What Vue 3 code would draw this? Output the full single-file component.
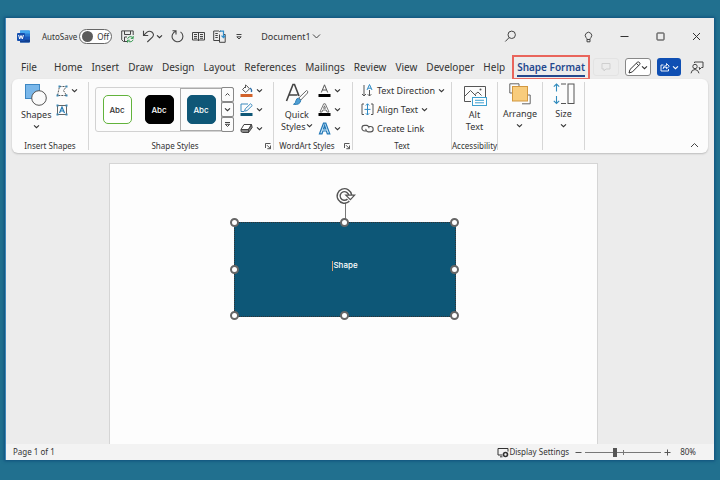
<script setup>
import { h, ref } from 'vue'

const autosave = ref(false)
const zoom = ref(80)
const tabs = ['File', 'Home', 'Insert', 'Draw', 'Design', 'Layout', 'References', 'Mailings', 'Review', 'View', 'Developer', 'Help']
const handles = ['nw', 'n', 'ne', 'w', 'e', 'sw', 's', 'se']

const Chevron = () =>
  h('svg', { width: 7, height: 7, viewBox: '0 0 7 7', fill: 'none', stroke: 'currentColor', 'stroke-width': 1.1, 'aria-hidden': 'true' }, [
    h('path', { d: 'M1 2.3 3.5 4.7 6 2.3' })
  ])
const Launcher = () =>
  h('svg', { width: 8, height: 8, viewBox: '0 0 8 8', fill: 'none', stroke: '#444', 'stroke-width': 0.9, 'aria-hidden': 'true' }, [
    h('path', { d: 'M1.5 6V1.5H6.5M3 3.2 6.4 6.6M6.5 3.5V6.7H3.3' })
  ])
</script>

<template>
  <main class="desktop">
    <section class="window" aria-label="Document window">
      <header class="titlebar">
        <svg class="logo" width="13" height="13" viewBox="0 0 13 13" aria-hidden="true">
          <rect x="3" y="0.5" width="10" height="12" rx="1" fill="#2b7cd3" />
          <path d="M3 .5H12Q13 .5 13 1.5V3.5H3Z" fill="#41a5ee" />
          <path d="M3 6.5H13V9.5H3Z" fill="#185abd" />
          <path d="M3 9.5H13V11.5Q13 12.5 12 12.5H3Z" fill="#103f91" />
          <rect x="0" y="3" width="8" height="8" rx="1" fill="#1550b0" />
          <path d="M1.6 5 2.7 9 4 5.5 5.3 9 6.4 5" fill="none" stroke="#fff" stroke-width="1" />
        </svg>
        <label class="autosave">
          <span>AutoSave</span>
          <input v-model="autosave" type="checkbox" />
          <span class="switch"><i></i>{{ autosave ? 'On' : 'Off' }}</span>
        </label>
        <div class="quick">
          <button aria-label="Save">
            <svg width="13" height="13" viewBox="0 0 13 13" fill="none" stroke="#444">
              <path d="M6 11.5H2.5L.7 9.8V.9H12.2V5M3.5 1V4.5H9.5V1M3.5 11V7H6" />
              <path d="M6.5 8.8Q7.5 6.4 9.8 6.6 11.3 6.8 12 8.2M12.2 6V8.4H9.8M12.2 9.8Q11 12 9 11.9 7.4 11.7 6.8 10.5M6.5 12.6V10.2H8.8" stroke="#3a9c55" />
            </svg>
          </button>
          <button class="split" aria-label="Undo">
            <svg width="13" height="13" viewBox="0 0 13 13" fill="none" stroke="#444" stroke-width="1.1">
              <path d="M1.5.8V5.5H6.2M1.6 5.4 4.7 2.4Q7.3.3 9.8 2 12.8 4.5 10.4 7.2L5.3 12" />
            </svg>
            <Chevron />
          </button>
          <button aria-label="Repeat">
            <svg width="13" height="13" viewBox="0 0 13 13" fill="none" stroke="#444" stroke-width="1.1">
              <path d="M1.5.8H5V4.4M5 1.2A5.4 5.4 0 1 0 9.5 1.9" />
            </svg>
          </button>
          <button aria-label="Read mode">
            <svg width="13" height="11" viewBox="0 0 13 11" fill="none" stroke="#444">
              <path d="M.5 1.5H12.5V9H.5ZM6.5 1.5V10M2 3.5H5M2 5.5H5M2 7.3H5M8 3.5H11M8 5.5H11M8 7.3H11" />
            </svg>
          </button>
          <button aria-label="Compare">
            <svg width="13" height="13" viewBox="0 0 13 13" fill="none" stroke="#444">
              <path d="M6 10.5H.7V1H5.8L6.5 1.7 7.2 1H8M2.3 3.5H4.8M2.3 5.5H4.8M2.3 7.5H4.8M6.5 4.5V12.3H12.2V4.5H10.8" />
              <path d="M7 1.2H10.5V7.5M8.5 5.7 10.5 7.7 12.5 5.7" stroke="#2f8dcb" stroke-width="1.2" />
            </svg>
          </button>
          <button class="customize" aria-label="Customize toolbar">
            <svg width="8" height="8" viewBox="0 0 8 8" fill="none" stroke="#444"><path d="M1.5 1.5H6.5M1.8 3.8 4 6 6.2 3.8Z" /></svg>
          </button>
        </div>
        <button class="docname">
          Document1
          <svg width="9" height="7" viewBox="0 0 9 7" fill="none" stroke="#444"><path d="M1 1.5 4.5 5 8 1.5" /></svg>
        </button>
        <div class="wincontrols">
          <button aria-label="Search">
            <svg width="13" height="13" viewBox="0 0 13 13" fill="none" stroke="#444"><circle cx="7.7" cy="4.8" r="3.7" /><path d="M5.1 7.6 1.3 11.5" /></svg>
          </button>
          <button class="tips" aria-label="Tips">
            <svg width="9" height="12" viewBox="0 0 9 12" fill="none" stroke="#444"><path d="M3 8.5Q3 7.5 2 6.5A3.2 3.2 0 1 1 7 6.5Q6 7.5 6 8.5V10.8H3ZM3 8.5H6" /></svg>
          </button>
          <button aria-label="Minimize">
            <svg width="9" height="9" viewBox="0 0 9 9" fill="none" stroke="#333"><path d="M.5 4.5H8.5" /></svg>
          </button>
          <button aria-label="Maximize">
            <svg width="9" height="9" viewBox="0 0 9 9" fill="none" stroke="#333"><rect x="1" y="1" width="7" height="7" rx="0.5" /></svg>
          </button>
          <button aria-label="Close">
            <svg width="9" height="9" viewBox="0 0 9 9" fill="none" stroke="#333"><path d="M1 1 8 8M8 1 1 8" /></svg>
          </button>
        </div>
      </header>

      <nav class="tabs" aria-label="Ribbon tabs">
        <a v-for="t in tabs" :key="t" href="#" :class="{ file: t === 'File' }">{{ t }}</a>
        <a href="#" class="current" aria-current="page"><span>Shape Format</span></a>
        <div class="actions">
          <button class="comments" aria-label="Comments">
            <svg width="10" height="10" viewBox="0 0 10 10" fill="none" stroke="#cfcfcf"><path d="M1 1.5H9V7H5L3 9V7H1Z" /></svg>
          </button>
          <button class="editing" aria-label="Editing mode">
            <svg width="13" height="13" viewBox="0 0 13 13" fill="none" stroke="#333"><path d="M1 12 2 8.5 9.3 1.3Q10.3.5 11.5 1.5 12.5 2.6 11.6 3.6L4.4 10.9ZM8.4 2.3 10.7 4.6" /></svg>
            <Chevron />
          </button>
          <button class="share" aria-label="Share">
            <svg width="10" height="10" viewBox="0 0 10 10" fill="none" stroke="#fff"><path d="M3.5 3H1V9H8.5V7M3 6.5Q3.5 3.5 6.5 3.5V1.5L9.3 4.3 6.5 6.7V5Q4.3 5 3 6.5Z" stroke-width=".9" /></svg>
            <Chevron />
          </button>
          <button class="presence" aria-label="Catch up">
            <svg width="14" height="13" viewBox="0 0 14 13" fill="none" stroke="#444"><circle cx="5" cy="5.5" r="2.2" /><path d="M1 12.3Q1.5 8.5 5 8.5 8.3 8.7 9 12.3M4.5 2V1H13V6.5H11.5L9.5 8.5V6.5H8.7" /></svg>
          </button>
        </div>
      </nav>

      <div class="ribbon">
        <section class="group insert">
          <div class="body">
            <button class="big">
              <svg width="22" height="23" viewBox="0 0 22 23"><rect x="0.5" y="1.5" width="14" height="14" fill="#79b7ea" stroke="#3d87c3" /><circle cx="14" cy="15" r="7.3" fill="#fafafa" stroke="#555" /></svg>
              <span>Shapes</span>
              <Chevron />
            </button>
            <div class="stack">
              <button class="split" aria-label="Edit shape">
                <svg width="12" height="12" viewBox="0 0 12 12" fill="none" stroke="#555"><path d="M3.5 1.5H10.5L7.5 5.5 10.5 10.5H1.5Z" stroke-dasharray="2 1" /><path d="M2.5.5h2v2h-2zM9.5.5h2v2h-2zM.5 9.5h2v2h-2zM9.5 9.5h2v2h-2z" fill="#3d87b3" stroke="none" /></svg>
                <Chevron />
              </button>
              <button aria-label="Draw text box">
                <svg width="12" height="12" viewBox="0 0 12 12" fill="none" stroke="#5595b8"><path d="M1.5 1.5H10.5V10.5H1.5Z" stroke="#666" /><path d="M3.5 9 6 3 8.5 9M4.5 7H7.5" stroke="#237bb5" stroke-width="1.2" /><path d="M.5.5h2v2h-2zM9.5.5h2v2h-2zM.5 9.5h2v2h-2zM9.5 9.5h2v2h-2z" fill="#3d87b3" stroke="none" /></svg>
              </button>
            </div>
          </div>
          <h2>Insert Shapes</h2>
        </section>

        <section class="group styles">
          <div class="body">
            <div class="gallery">
              <button><span class="tile green">Abc</span></button>
              <button><span class="tile black">Abc</span></button>
              <button class="picked"><span class="tile teal">Abc</span></button>
              <div class="scroller">
                <button aria-label="Previous styles"><svg width="7" height="7" viewBox="0 0 7 7" fill="none" stroke="#444"><path d="M1.5 4.5 3.5 2.5 5.5 4.5" /></svg></button>
                <button aria-label="Next styles"><Chevron /></button>
                <button aria-label="More styles"><svg width="7" height="7" viewBox="0 0 7 7" fill="none" stroke="#444"><path d="M1 1.5H6M1.3 3.3 3.5 5.5 5.7 3.3Z" /></svg></button>
              </div>
            </div>
            <div class="stack">
              <button class="split" aria-label="Shape fill">
                <svg width="13" height="13" viewBox="0 0 13 13" fill="none" stroke="#555"><path d="M2.5 5.5 6.5 1.5 9.5 4.8 5.8 8.5ZM5.5 4V.7" /><path d="M10 4Q12.3 5.5 11.3 8" stroke="#2f6fa8" stroke-width="1.4" /><rect x="0.5" y="10" width="12" height="3" fill="#d2622a" stroke="none" /></svg>
                <Chevron />
              </button>
              <button class="split" aria-label="Shape outline">
                <svg width="13" height="13" viewBox="0 0 13 13" fill="none" stroke="#3b89bd"><path d="M8 1H1V8.5H4M4.5 8.2 5.3 5.8 10.5.8 12.3 2.5 7 7.6Z" /><rect x="0.5" y="10" width="12" height="3" fill="#0f5777" stroke="none" /></svg>
                <Chevron />
              </button>
              <button class="split" aria-label="Shape effects">
                <svg width="13" height="13" viewBox="0 0 13 13" stroke="#444"><path d="M4 2.5H11.5L8.5 7.5H1Z" fill="#fff" /><path d="M1 7.5H8.5V10.5H2.5L1 9.5ZM8.5 7.5 11.5 2.5 12.2 5.5 8.5 10.5Z" fill="#888" /></svg>
                <Chevron />
              </button>
            </div>
          </div>
          <h2>Shape Styles</h2>
          <button class="launch" aria-label="Format shape"><Launcher /></button>
        </section>

        <section class="group wordart">
          <div class="body">
            <button class="big">
              <svg width="24" height="23" viewBox="0 0 24 23" fill="none"><path d="M1.5 18 8 1.5H9.5L14 13M4.5 12H12.5" stroke="#444" stroke-width="1.6" /><path d="M21.5 7.5Q23.5 8 22.5 10L15.8 17 13.8 15Z" fill="#fff" stroke="#666" /><path d="M13.5 15.2 15.8 17.4Q15 22.3 8.5 21.3 11 20 11 17.5 11.5 15.3 13.5 15.2Z" fill="#4f9fd4" stroke="#2e7db3" /></svg>
              <span>Quick</span>
              <span class="inline">Styles <Chevron /></span>
            </button>
            <div class="stack">
              <button class="split" aria-label="Text fill">
                <svg width="13" height="13" viewBox="0 0 13 13"><path d="M3.3 8.5 6.5.8 9.7 8.5M4.4 6H8.6" fill="none" stroke="#555" /><rect x="0.5" y="10" width="12" height="3" /></svg>
                <Chevron />
              </button>
              <button class="split" aria-label="Text outline">
                <svg width="13" height="13" viewBox="0 0 13 13"><path d="M2 9 5.7.8H7.3L11 9H9L8.2 7H4.8L4 9ZM5.5 5.3H7.5L6.5 2.8Z" fill="#fff" stroke="#555" stroke-width=".8" /><rect x="0.5" y="10" width="12" height="3" /></svg>
                <Chevron />
              </button>
              <button class="split" aria-label="Text effects">
                <svg width="13" height="13" viewBox="0 0 13 13"><path d="M1.5 11.8 5.5 1.2H7.8L11.8 11.8H9.3L8.4 9H4.9L4 11.8ZM5.5 7H7.8L6.6 3.5Z" fill="#d7ecfa" stroke="#2379b8" stroke-width="1.2" /></svg>
                <Chevron />
              </button>
            </div>
          </div>
          <h2>WordArt Styles</h2>
          <button class="launch" aria-label="Format text effects"><Launcher /></button>
        </section>

        <section class="group text">
          <div class="body">
            <div class="stack">
              <button class="split">
                <svg width="13" height="13" viewBox="0 0 13 13" fill="none" stroke="#555"><path d="M3 1V12M1 10 3 12 5 10" /><path d="M8.5 6V12M6.7 10.2 8.5 12 10.3 10.2" /><path d="M6 6 8.5.5 11 6M7 4.2H10" stroke="#2e8ac4" /></svg>
                Text Direction <Chevron />
              </button>
              <button class="split">
                <svg width="13" height="13" viewBox="0 0 13 13" fill="none" stroke="#555"><path d="M3 1H1V11.5H3M10 1H12V11.5H10" /><path d="M6.5.8V12M4.8 2.5 6.5.8 8.2 2.5M4.8 10.3 6.5 12 8.2 10.3M3.5 6.4H9.5" stroke="#2e8ac4" /></svg>
                Align Text <Chevron />
              </button>
              <button class="split">
                <svg width="13" height="13" viewBox="0 0 13 13" fill="none" stroke="#555" stroke-width="1.1"><path d="M5.5 9H3.7A2.8 2.8 0 0 1 3.7 3.4H5.5A2.6 2.6 0 0 1 8 6.3M7.5 4.5H9.5A2.7 2.7 0 0 1 9.5 9.9H7.3A2.6 2.6 0 0 1 4.9 6.8" /></svg>
                Create Link
              </button>
            </div>
          </div>
          <h2>Text</h2>
        </section>

        <section class="group alt">
          <div class="body">
            <button class="big">
              <svg width="24" height="23" viewBox="0 0 24 23" fill="none" stroke="#555"><path d="M8 18.5H1.5V3.5H22.5V14M1.5 13.5 7.5 7.5 13 13M12 11.5 15 9 18.5 12.5" /><circle cx="17.5" cy="6.5" r="1" fill="#555" stroke="none" /><rect x="9.5" y="14.5" width="14" height="8" fill="#fff" stroke="#3fa0d0" /><path d="M12 17.3H21M12 19.8H21" stroke="#3fa0d0" /></svg>
              <span>Alt</span>
              <span>Text</span>
            </button>
          </div>
          <h2>Accessibility</h2>
        </section>

        <section class="group arrange">
          <div class="body">
            <button class="big">
              <svg width="22" height="22" viewBox="0 0 22 22" fill="none" stroke="#666"><path d="M3 10H.8V.8H10V3M13 20.8H21.2V12H18" /><rect x="3.5" y="3.5" width="15" height="14.5" fill="#f8cc7c" stroke="#d29840" /></svg>
              <span>Arrange</span>
              <Chevron />
            </button>
          </div>
        </section>

        <section class="group size">
          <div class="body">
            <button class="big">
              <svg width="22" height="22" viewBox="0 0 22 22" fill="none" stroke="#555"><path d="M3.5 1V8.5M.8 3.7 3.5 1 6.2 3.7M3.5 13V20.5M.8 17.8 3.5 20.5 6.2 17.8" stroke="#318bbd" stroke-width="1.1" /><path d="M8 1H13M8 20.5H13" /><rect x="15" y="1" width="6" height="19.5" /></svg>
              <span>Size</span>
              <Chevron />
            </button>
          </div>
        </section>

        <button class="collapse" aria-label="Collapse ribbon">
          <svg width="9" height="7" viewBox="0 0 9 7" fill="none" stroke="#444"><path d="M1 5 4.5 1.5 8 5" /></svg>
        </button>
      </div>

      <div class="workspace">
        <article class="page">
          <div class="shape">
            <span class="stem"></span>
            <svg class="rotate" width="20" height="18" viewBox="0 0 20 18" fill="none"><path d="M12.4 13.2A5.8 5.8 0 1 1 14.2 8.2" stroke="#555" stroke-width="4.4" /><path d="M12.4 13.2A5.8 5.8 0 1 1 14.2 8.2" stroke="#fff" stroke-width="1.5" /><path d="M9.8 8.2H18.6L14.4 12.6Z" fill="#fff" stroke="#555" stroke-width="1.2" /></svg>
            <p><i class="caret"></i>Shape</p>
            <span v-for="d in handles" :key="d" class="handle" :class="d"></span>
          </div>
        </article>
      </div>

      <footer class="status">
        <span>Page 1 of 1</span>
        <button class="display">
          <svg width="12" height="11" viewBox="0 0 12 11" fill="none" stroke="#333"><path d="M5.5 8H1V1.5H11V4.5M3 9.8H5.5" /><circle cx="8.5" cy="7.5" r="2" stroke-width="1.6" /></svg>
          Display Settings
        </button>
        <button class="step" aria-label="Zoom out"><svg width="7" height="7" viewBox="0 0 7 7" stroke="#555"><path d="M.5 3.5H6.5" /></svg></button>
        <input v-model="zoom" type="range" min="10" max="190" aria-label="Zoom" />
        <button class="step" aria-label="Zoom in"><svg width="7" height="7" viewBox="0 0 7 7" stroke="#555"><path d="M.5 3.5H6.5M3.5 .5V6.5" /></svg></button>
        <span class="percent">{{ zoom }}%</span>
      </footer>
    </section>
  </main>
</template>

<style>
body {
  margin: 0;
  background: #21708f;
}
</style>

<style scoped>
* {
  box-sizing: border-box;
}
.desktop {
  min-height: 100vh;
  display: flex;
  padding: 18px 6px 20px 5px;
  background: #21708f;
  font-family: "Noto Sans", "Open Sans", sans-serif;
  font-size: 9px;
  line-height: 12px;
  color: #333;
}
.window {
  flex: 1;
  min-width: 0;
  display: flex;
  flex-direction: column;
  background: #ececec;
  border-left: 1px solid #3f86b8;
  box-shadow: 0 0 3px 1px #0f4f7c;
}
button {
  display: flex;
  align-items: center;
  justify-content: center;
  padding: 0;
  border: 0;
  background: none;
  font: inherit;
  color: inherit;
  white-space: nowrap;
}
svg {
  flex: none;
  display: block;
}
a {
  color: inherit;
  text-decoration: none;
}

.titlebar {
  display: flex;
  align-items: center;
  height: 37px;
  padding: 0 13px 0 11px;
}
.autosave {
  display: flex;
  align-items: center;
  gap: 2px;
  margin-left: 12px;
  position: relative;
  font-size: 8px;
}
.autosave input {
  position: absolute;
  right: 0;
  width: 32px;
  height: 14px;
  margin: 0;
  opacity: 0;
}
.switch {
  display: flex;
  align-items: center;
  gap: 4px;
  width: 33px;
  height: 15px;
  padding-left: 2px;
  border: 1px solid #666;
  border-radius: 8px;
  background: #fff;
}
.switch i {
  width: 11px;
  height: 11px;
  border-radius: 50%;
  background: #5c5c5c;
}
.quick {
  display: flex;
  align-items: center;
  gap: 8px;
  margin-left: 9px;
}
.quick .split {
  gap: 1px;
}
.customize {
  margin-left: 1px;
}
.docname {
  gap: 1px;
  margin-left: 18px;
}
.wincontrols {
  display: flex;
  align-items: center;
  gap: 27px;
  margin-left: auto;
}
.tips {
  margin-left: 40px;
}

.tabs {
  display: flex;
  align-items: center;
  gap: 9px;
  height: 24px;
  padding: 0 7px 0 15px;
  font-size: 10px;
  line-height: 15px;
  white-space: nowrap;
}
.tabs .file {
  margin-right: 8px;
}
.tabs .current {
  margin: 0 -6px 0 -2px;
  padding: 3px 3px 1px;
  border: 2px solid #e9655c;
  color: #24488e;
  font-weight: 600;
}
.current span {
  display: block;
  border-bottom: 2px solid #24488e;
}
.actions {
  display: flex;
  align-items: center;
  gap: 6px;
  margin-left: auto;
}
.actions button {
  height: 18px;
  gap: 2px;
  border-radius: 3px;
}
.comments {
  width: 26px;
  border: 1px solid #e3e3e3;
}
.actions .editing {
  width: 26px;
  gap: 0;
  border: 1px solid #888;
  background: #fff;
}
.share {
  width: 24px;
  background: #0f4fb3;
  color: #fff;
}
.presence {
  width: 20px;
}

.ribbon {
  display: flex;
  height: 74px;
  margin: 0 6px;
  padding: 3px 0 3px;
  border-radius: 6px;
  background: #fcfcfc;
  box-shadow: 0 1px 2px #bbb;
}
.group {
  position: relative;
  display: flex;
  flex-direction: column;
  flex: none;
  border-right: 1px solid #d6d6d6;
}
.body {
  flex: 1;
  display: flex;
}
.group h2 {
  margin: 0;
  font-size: 8px;
  line-height: 8px;
  font-weight: 400;
  text-align: center;
  white-space: nowrap;
}
.styles h2,
.wordart h2 {
  padding-right: 12px;
}
.launch {
  position: absolute;
  right: 1px;
  bottom: 0;
}
.big {
  flex-direction: column;
  justify-content: flex-start;
  padding-top: 1px;
}
.big svg:first-child {
  margin-bottom: 3px;
}
.big > svg:last-child {
  margin-top: 2px;
}
.inline {
  display: flex;
  align-items: center;
}
.stack {
  display: flex;
  flex-direction: column;
  align-items: flex-start;
  gap: 6px;
  padding-top: 2px;
}
.stack button {
  height: 13px;
}
.stack .split {
  gap: 3px;
}
.insert {
  width: 77px;
}
.insert .body {
  gap: 5px;
  padding-left: 9px;
}
.styles {
  width: 185px;
}
.styles .body {
  gap: 6px;
  padding-left: 6px;
}
.gallery {
  display: flex;
  align-self: flex-start;
  height: 45px;
  margin-top: 5px;
  border: 1px solid #d2d2d2;
  border-radius: 3px;
}
.gallery > button {
  width: 42px;
}
.gallery .picked {
  border: 1px solid #aaa;
}
.tile {
  display: grid;
  place-items: center;
  width: 29px;
  height: 29px;
  border-width: 1px;
  border-style: solid;
  border-radius: 5px;
  font-family: Inter, sans-serif;
  font-size: 8px;
  font-weight: 500;
}
.green {
  border-color: #62b33c;
  background: #fff;
}
.black {
  border-color: #000;
  background: #000;
  color: #fff;
}
.teal {
  border-color: #0f5777;
  background: #0f5777;
  color: #fff;
}
.scroller {
  display: grid;
  grid-template-rows: repeat(3, 1fr);
  width: 13px;
  margin: -1px;
}
.scroller button {
  border: 1px solid #888;
  border-radius: 2px;
}
.wordart {
  width: 79px;
}
.wordart .body {
  gap: 5px;
  padding-left: 7px;
}
.text {
  width: 99px;
}
.text .body {
  padding-left: 8px;
}
.stack .split:has(> svg + svg) {
  gap: 3px;
}
.alt {
  width: 46px;
}
.arrange {
  width: 45px;
}
.size {
  width: 42px;
}
.alt .body,
.arrange .body,
.size .body {
  justify-content: center;
}
.collapse {
  margin: auto 9px 1px auto;
}

.workspace {
  flex: 1;
  display: flex;
  padding: 10px 116px 0 103px;
}
.page {
  position: relative;
  flex: 1;
  border: 1px solid #d5d5d5;
  border-bottom: 0;
  background: #fdfdfd;
}
.shape {
  position: absolute;
  left: 124px;
  top: 58px;
  width: 222px;
  height: 95px;
  border: 1px dotted #333;
  background: #0d5777;
}
.shape p {
  position: relative;
  margin: 36px 0 0;
  font-family: Inter, sans-serif;
  font-size: 8px;
  line-height: 12px;
  font-weight: 500;
  color: #fff;
  text-align: center;
}
.caret {
  display: inline-block;
  width: 1px;
  height: 10px;
  background: #e0a070;
  vertical-align: middle;
}
.stem {
  position: absolute;
  left: 50%;
  top: -20px;
  width: 1px;
  height: 18px;
  background: #777;
}
.rotate {
  position: absolute;
  left: calc(50% - 9px);
  top: -36px;
}
.handle {
  position: absolute;
  width: 9px;
  height: 9px;
  margin: -5px;
  border: 2px solid #666;
  border-radius: 50%;
  background: #fff;
}
.nw, .n, .ne { top: 0; }
.w, .e { top: 50%; }
.sw, .s, .se { top: 100%; }
.nw, .w, .sw { left: 0; }
.n, .s { left: 50%; }
.ne, .e, .se { left: 100%; }

.status {
  display: flex;
  align-items: center;
  height: 16px;
  padding: 0 18px 0 7px;
  background: #f3f3f3;
  font-size: 8px;
}
.display {
  margin-left: auto;
}
.step {
  margin: 0 3px;
}
.display + .step {
  margin-left: 6px;
}
.status input {
  width: 76px;
  height: 12px;
  margin: 0;
  appearance: none;
  background: linear-gradient(#777, #777) 50% 50% / 100% 1px no-repeat, linear-gradient(#777, #777) 50% 50% / 1px 5px no-repeat;
}
.status input::-webkit-slider-thumb {
  appearance: none;
  width: 4px;
  height: 9px;
  background: #555;
}
.percent {
  margin-left: 6px;
}
</style>
